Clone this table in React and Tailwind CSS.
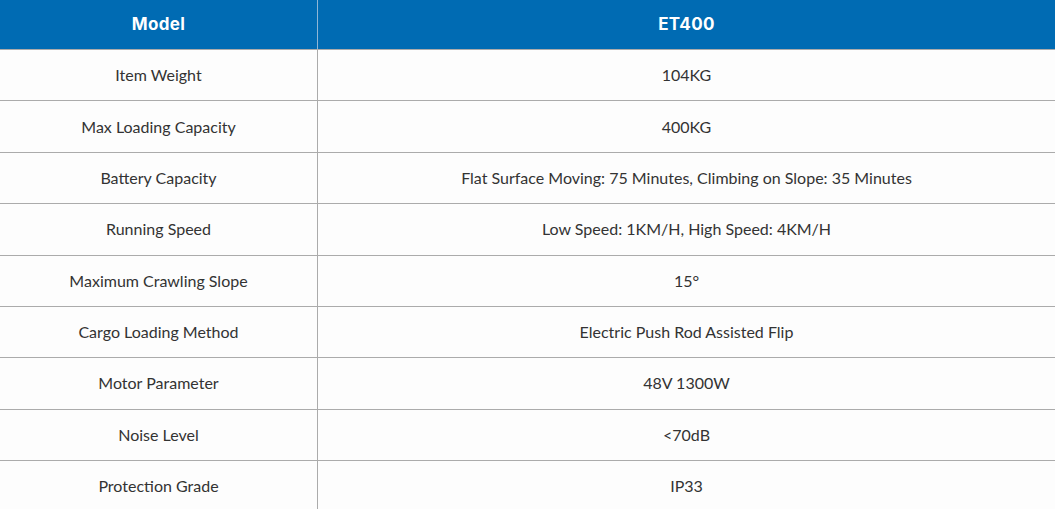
import React from 'react';

const rows = [
  ['Item Weight', '104KG'],
  ['Max Loading Capacity', '400KG'],
  ['Battery Capacity', 'Flat Surface Moving: 75 Minutes, Climbing on Slope: 35 Minutes'],
  ['Running Speed', 'Low Speed: 1KM/H, High Speed: 4KM/H'],
  ['Maximum Crawling Slope', '15°'],
  ['Cargo Loading Method', 'Electric Push Rod Assisted Flip'],
  ['Motor Parameter', '48V 1300W'],
  ['Noise Level', '<70dB'],
  ['Protection Grade', 'IP33'],
];

export default function App() {
  return (
    <div className="w-[1055px] h-[509px] overflow-hidden bg-[#fdfdfd] font-['Lato','Open_Sans',sans-serif] text-[16px] text-[#333]">
      {/* Header */}
      <div className="flex h-[49px] bg-[#006bb3] text-white font-bold font-['Inter',sans-serif] text-[17px] tracking-[0.02em]">
        <div className="w-[318px] flex items-center justify-center border-r border-[#8fb6d6]">Model</div>
        <div className="flex-1 flex items-center justify-center">ET400</div>
      </div>

      {/* Spec rows */}
      {rows.map(([label, value], i) => (
        <div key={i} className="flex h-[51.375px] border-t border-[#ababab]">
          <div className="w-[318px] flex items-center justify-center border-r border-[#ababab]">{label}</div>
          <div className="flex-1 flex items-center justify-center">{value}</div>
        </div>
      ))}
    </div>
  );
}
